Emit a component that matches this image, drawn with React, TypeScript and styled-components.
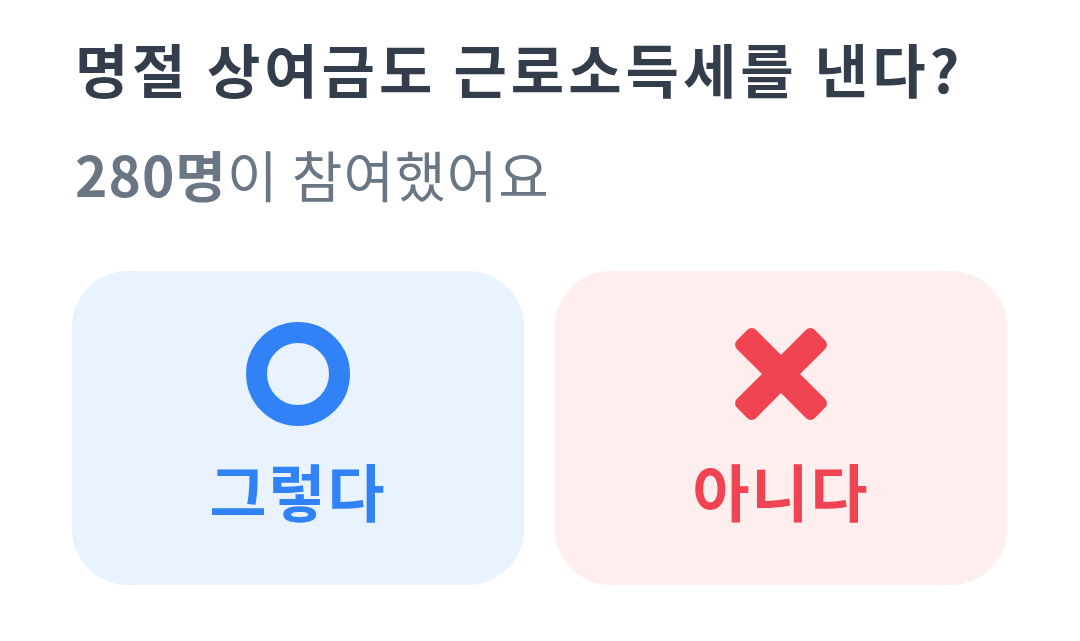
import styled, { createGlobalStyle } from "styled-components";

const GlobalStyle = createGlobalStyle`
  body {
    margin: 0;
    background: #ffffff;
    font-family: "Noto Sans CJK KR", "Noto Sans", sans-serif;
  }
`;

export default function App() {
  return (
    <>
      <GlobalStyle />
      <Container>
        <Title>명절 상여금도 근로소득세를 낸다?</Title>
        <Sub>
          <Count>280명</Count>이 참여했어요
        </Sub>
        <Choices>
          <Choice tone="yes">
            <Icon viewBox="0 0 104 104">
              <circle cx="52" cy="52" r="41.5" fill="none" stroke="#3182f6" strokeWidth="21" />
            </Icon>
            <Label tone="yes">그렇다</Label>
          </Choice>
          <Choice tone="no">
            <Icon viewBox="0 0 104 104">
              <g fill="#f04452">
                <rect x="-3" y="38.5" width="110" height="27" rx="6" transform="rotate(45 52 52)" />
                <rect x="-3" y="38.5" width="110" height="27" rx="6" transform="rotate(-45 52 52)" />
              </g>
            </Icon>
            <Label tone="no">아니다</Label>
          </Choice>
        </Choices>
      </Container>
    </>
  );
}

type Tone = "yes" | "no";

const palette = {
  yes: { bg: "#e8f3ff", fg: "#3182f6" },
  no: { bg: "#feeeee", fg: "#f04452" },
};

const Container = styled.div`
  width: 1080px;
  height: 641px;
  padding: 31px 72px 0;
  box-sizing: border-box;
`;

const Title = styled.h1`
  margin: 0 0 0 3px;
  font-size: 58px;
  font-weight: 700;
  line-height: 1.3;
  letter-spacing: 4px;
  color: #333d4b;
`;

const Sub = styled.p`
  margin: 32px 0 0 3px;
  font-size: 55px;
  font-weight: 400;
  line-height: 1.3;
  letter-spacing: 1px;
  color: #6b7684;
`;

const Count = styled.span`
  font-weight: 700;
`;

const Choices = styled.div`
  display: grid;
  grid-template-columns: 452px 452px;
  gap: 31px;
  margin-top: 61px;
`;

const Choice = styled.div<{ tone: Tone }>`
  height: 314px;
  border-radius: 56px;
  background: ${(p) => palette[p.tone].bg};
  display: flex;
  flex-direction: column;
  align-items: center;
  gap: 27px;
  padding-top: 51px;
  box-sizing: border-box;
`;

const Icon = styled.svg`
  width: 104px;
  height: 104px;
`;

const Label = styled.span<{ tone: Tone }>`
  font-size: 62px;
  font-weight: 700;
  line-height: 1.2;
  letter-spacing: 2px;
  color: ${(p) => palette[p.tone].fg};
`;
